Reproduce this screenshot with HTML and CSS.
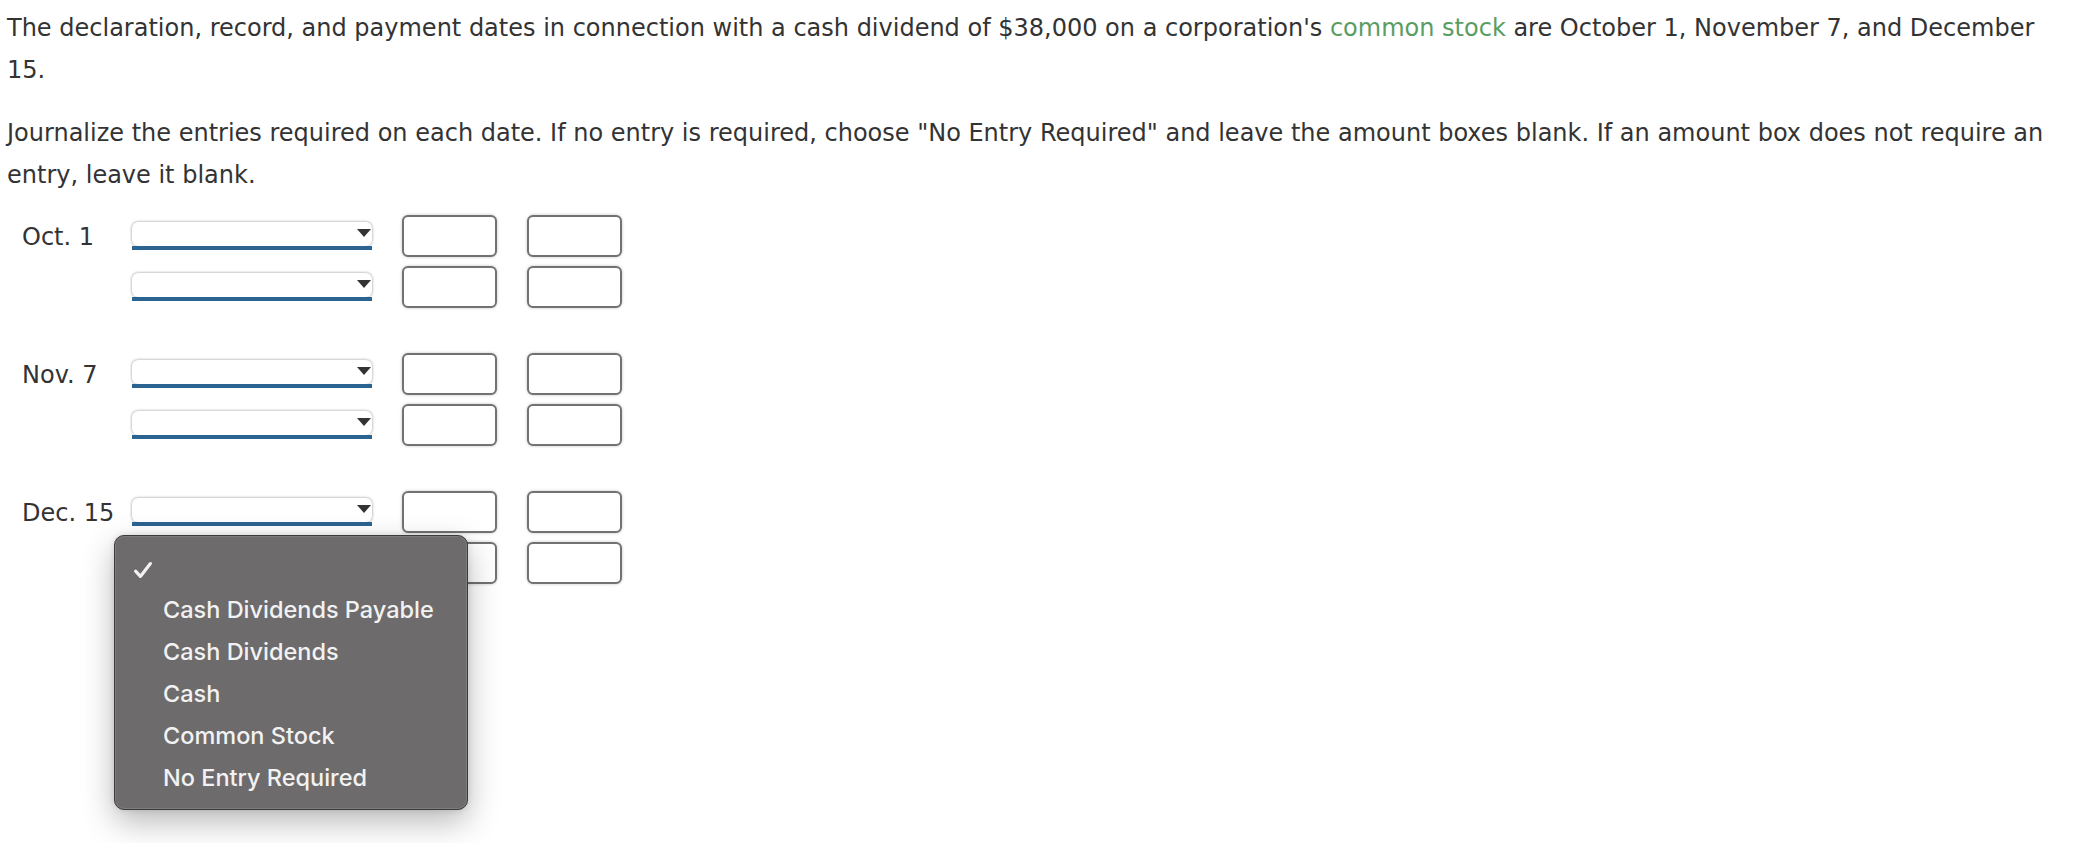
FILE: index.html
```html
<!DOCTYPE html>
<html lang="en">
<head>
<meta charset="utf-8">
<title>Journal entries</title>
<link rel="stylesheet" href="styles.css">
</head>
<body>
<div class="page">
  <p class="q">The declaration, record, and payment dates in connection with a cash dividend of $38,000 on a corporation's <span class="term">common stock</span> are October 1, November 7, and December 15.</p>
  <p class="q">Journalize the entries required on each date. If no entry is required, choose "No Entry Required" and leave the amount boxes blank. If an amount box does not require an entry, leave it blank.</p>

  <div class="journal">
    <div class="group">
      <div class="row">
        <div class="date">Oct. 1</div>
        <div class="sel"><span class="arrow"></span></div>
        <div class="amt"></div>
        <div class="amt"></div>
      </div>
      <div class="row">
        <div class="date"></div>
        <div class="sel"><span class="arrow"></span></div>
        <div class="amt"></div>
        <div class="amt"></div>
      </div>
    </div>

    <div class="group">
      <div class="row">
        <div class="date">Nov. 7</div>
        <div class="sel"><span class="arrow"></span></div>
        <div class="amt"></div>
        <div class="amt"></div>
      </div>
      <div class="row">
        <div class="date"></div>
        <div class="sel"><span class="arrow"></span></div>
        <div class="amt"></div>
        <div class="amt"></div>
      </div>
    </div>

    <div class="group">
      <div class="row">
        <div class="date">Dec. 15</div>
        <div class="sel open"><span class="arrow"></span>
          <div class="menu">
            <div class="item checked"><svg class="check" width="20" height="18" viewBox="0 0 20 18"><path d="M2.6 10.2 L7.4 15.4 L17.4 2.6" fill="none" stroke="#f2f2f2" stroke-width="3.2" stroke-linecap="round" stroke-linejoin="round"/></svg></div>
            <div class="item">Cash Dividends Payable</div>
            <div class="item">Cash Dividends</div>
            <div class="item">Cash</div>
            <div class="item">Common Stock</div>
            <div class="item">No Entry Required</div>
          </div>
        </div>
        <div class="amt"></div>
        <div class="amt"></div>
      </div>
      <div class="row">
        <div class="date"></div>
        <div class="sel"><span class="arrow"></span></div>
        <div class="amt"></div>
        <div class="amt"></div>
      </div>
    </div>
  </div>
</div>
</body>
</html>
```

FILE: styles.css
```css
html, body {
  margin: 0;
  padding: 0;
  background: #ffffff;
}

body {
  min-height: 843px;
}

.page {
  box-sizing: border-box;
  min-height: 843px;
  padding: 7px 7px 0 7px;
  font-family: "DejaVu Sans", Verdana, sans-serif;
  font-size: 24px;
  line-height: 42px;
  color: #333333;
}

.q {
  margin: 0 0 21px 0;
}

.term {
  color: #5a9d62;
}

.journal {
  display: flex;
  flex-direction: column;
  gap: 44px;
  margin-top: -3px;
}

.group {
  display: flex;
  flex-direction: column;
  gap: 10px;
}

.row {
  display: grid;
  grid-template-columns: 80px 240px 95px 95px;
  column-gap: 30px;
  align-items: center;
  height: 42px;
  padding-left: 15px;
}

.date {
  white-space: nowrap;
  line-height: 42px;
  padding-top: 2px;
}

.sel {
  position: relative;
  height: 28px;
}

.sel::before {
  content: "";
  position: absolute;
  left: 0;
  right: 0;
  top: 0;
  height: 24px;
  background: #ffffff;
  border-radius: 6px;
  box-shadow: 0 0 3px rgba(0, 0, 0, 0.45);
}

.sel::after {
  content: "";
  position: absolute;
  left: 0;
  right: 0;
  bottom: 0;
  height: 4px;
  background: #2b6490;
}

.arrow {
  position: absolute;
  right: 1px;
  top: 7px;
  width: 0;
  height: 0;
  border-left: 7px solid transparent;
  border-right: 7px solid transparent;
  border-top: 8px solid #333333;
  z-index: 1;
}

.amt {
  box-sizing: border-box;
  height: 42px;
  border: 2px solid #727272;
  border-radius: 6px;
  background: #ffffff;
  box-shadow: 0 0 3px rgba(0, 0, 0, 0.25);
}

.menu {
  position: absolute;
  left: -18px;
  top: 37px;
  width: 354px;
  height: 275px;
  box-sizing: border-box;
  padding: 11px 0 0 0;
  background: #6d6b6c;
  border: 1px solid #3c3b3b;
  border-radius: 10px;
  box-shadow: inset 0 0 0 1px rgba(255, 255, 255, 0.12), 0 12px 32px rgba(0, 0, 0, 0.28), 0 0 6px rgba(0, 0, 0, 0.12);
  font-family: Inter, "Noto Sans", sans-serif;
  font-size: 23.5px;
  font-weight: 500;
  line-height: 42px;
  color: #f2f2f2;
  z-index: 5;
}

.item {
  position: relative;
  height: 42px;
  padding-left: 48px;
  white-space: nowrap;
}

.check {
  position: absolute;
  left: 18px;
  top: 14px;
}
```
